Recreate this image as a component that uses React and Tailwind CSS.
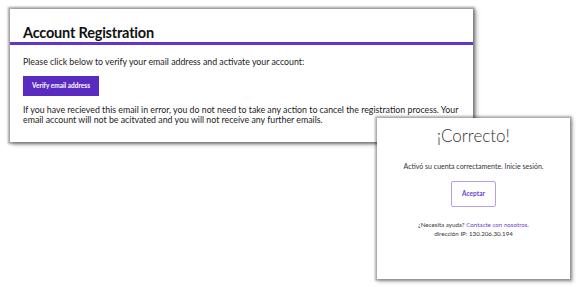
export default function App() {
  return (
    <div className="relative w-[578px] h-[287px] bg-white overflow-hidden" style={{ fontFamily: "Lato, 'Noto Sans', sans-serif" }}>
      <div className="absolute left-[10px] top-[9px] w-[463px] h-[133px] bg-white shadow-[0_0_2px_2px_rgba(0,0,0,0.35),3px_2px_4px_1px_rgba(0,0,0,0.25)] text-[#222]">
        <div className="pl-[13px] pt-[15px] h-[33px] text-[14.5px] leading-[18px] font-bold tracking-[-0.2px] text-[#111]">Account Registration</div>
        <div className="h-[3px] bg-[#6236c9]"></div>
        <div className="pl-[13px] mt-[11px] text-[8.8px] leading-[12px]">Please click below to verify your email address and activate your account:</div>
        <div className="pl-[13px] mt-[8px]">
          <div className="w-[76px] h-[20px] bg-[#5a2bc0] text-white text-[6.5px] font-bold flex items-center justify-center">Verify email address</div>
        </div>
        <div className="pl-[13px] pr-[14px] mt-[9px] text-[8.8px] leading-[10px]">
          If you have recieved this email in error, you do not need to take any action to cancel the registration process. Your email account will not be acitvated and you will not receive any further emails.
        </div>
      </div>
      <div className="absolute left-[377px] top-[118px] w-[193px] h-[161px] bg-white shadow-[0_0_2px_2px_rgba(0,0,0,0.3),2px_2px_4px_1px_rgba(0,0,0,0.2)] flex flex-col items-center text-[#333]">
        <div className="mt-[8px] text-[17px] leading-[20px] font-light text-[#333]">¡Correcto!</div>
        <div className="mt-[15px] text-[7px] leading-[10px]">Activó su cuenta correctamente. Inicie sesión.</div>
        <div className="mt-[10px] w-[45px] h-[26px] border border-[#b5a0e8] rounded-[2px] flex items-center justify-center text-[6.5px] font-bold text-[#6a3fd0]">Aceptar</div>
        <div className="mt-[13px] text-[6.2px] leading-[9px]">¿Necesita ayuda? <span className="text-[#6a3fd0]">Contacte con nosotros.</span></div>
        <div className="text-[6.2px] leading-[9px]">dirección IP: 130.206.30.194</div>
      </div>
    </div>
  );
}
